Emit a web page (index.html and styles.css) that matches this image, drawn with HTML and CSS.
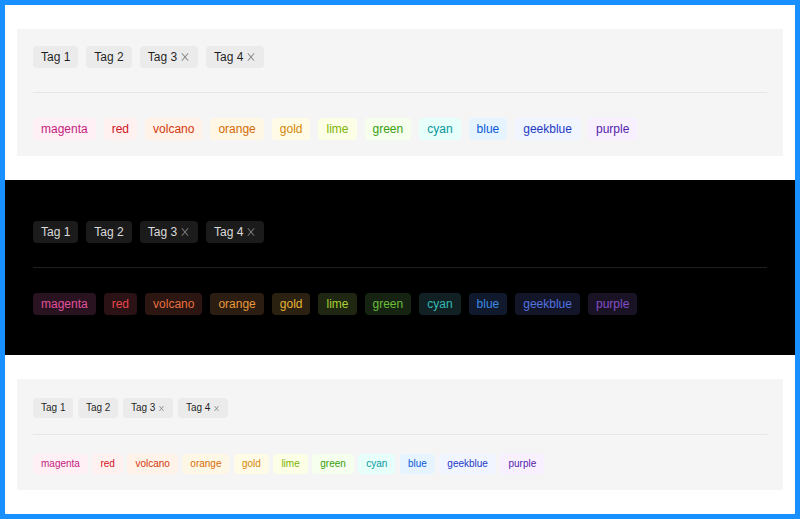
FILE: index.html
```html
<!DOCTYPE html>
<html>
<head>
<meta charset="utf-8">
<link rel="stylesheet" href="styles.css">
</head>
<body>
<svg width="0" height="0" style="position:absolute">
  <defs>
    <symbol id="x" viewBox="64 64 896 896"><path d="M563.8 512l262.5-312.9c4.4-5.2.7-13.1-6.1-13.1h-79.8c-4.7 0-9.2 2.1-12.3 5.7L511.6 449.8 295.1 191.7c-3-3.6-7.5-5.7-12.3-5.7H203c-6.8 0-10.5 7.9-6.1 13.1L459.4 512 196.9 824.9A7.950 7.950 0 00203 838h79.8c4.7 0 9.2-2.1 12.3-5.7l216.5-258.1 216.5 258.1c3 3.6 7.5 5.7 12.3 5.7h79.8c6.8 0 10.5-7.9 6.1-13.1L563.8 512z" fill="currentColor"/></symbol>
  </defs>
</svg>

<section class="wrap light">
  <div class="panel">
    <div class="row">
      <span class="tag">Tag 1</span>
      <span class="tag">Tag 2</span>
      <span class="tag">Tag 3<svg class="close"><use href="#x"/></svg></span>
      <span class="tag">Tag 4<svg class="close"><use href="#x"/></svg></span>
    </div>
    <div class="divider"></div>
    <div class="row">
      <span class="tag magenta">magenta</span>
      <span class="tag red">red</span>
      <span class="tag volcano">volcano</span>
      <span class="tag orange">orange</span>
      <span class="tag gold">gold</span>
      <span class="tag lime">lime</span>
      <span class="tag green">green</span>
      <span class="tag cyan">cyan</span>
      <span class="tag blue">blue</span>
      <span class="tag geekblue">geekblue</span>
      <span class="tag purple">purple</span>
    </div>
  </div>
</section>

<section class="wrap dark">
  <div class="panel">
    <div class="row">
      <span class="tag">Tag 1</span>
      <span class="tag">Tag 2</span>
      <span class="tag">Tag 3<svg class="close"><use href="#x"/></svg></span>
      <span class="tag">Tag 4<svg class="close"><use href="#x"/></svg></span>
    </div>
    <div class="divider"></div>
    <div class="row">
      <span class="tag magenta">magenta</span>
      <span class="tag red">red</span>
      <span class="tag volcano">volcano</span>
      <span class="tag orange">orange</span>
      <span class="tag gold">gold</span>
      <span class="tag lime">lime</span>
      <span class="tag green">green</span>
      <span class="tag cyan">cyan</span>
      <span class="tag blue">blue</span>
      <span class="tag geekblue">geekblue</span>
      <span class="tag purple">purple</span>
    </div>
  </div>
</section>

<section class="wrap light small">
  <div class="panel">
    <div class="row">
      <span class="tag">Tag 1</span>
      <span class="tag">Tag 2</span>
      <span class="tag">Tag 3<svg class="close"><use href="#x"/></svg></span>
      <span class="tag">Tag 4<svg class="close"><use href="#x"/></svg></span>
    </div>
    <div class="divider"></div>
    <div class="row">
      <span class="tag magenta">magenta</span>
      <span class="tag red">red</span>
      <span class="tag volcano">volcano</span>
      <span class="tag orange">orange</span>
      <span class="tag gold">gold</span>
      <span class="tag lime">lime</span>
      <span class="tag green">green</span>
      <span class="tag cyan">cyan</span>
      <span class="tag blue">blue</span>
      <span class="tag geekblue">geekblue</span>
      <span class="tag purple">purple</span>
    </div>
  </div>
</section>
</body>
</html>
```
FILE: styles.css
```css
* { box-sizing: border-box; }
html, body { margin: 0; padding: 0; }
body {
  width: 800px;
  height: 519px;
  border: 5px solid #1890ff;
  background: #fff;
  font-family: "Liberation Sans", Arial, sans-serif;
  font-size: 12px;
  overflow: hidden;
}
.wrap {
  padding: 24px 12px;
}
.panel {
  background: #f5f5f5;
  padding: 17px 16px 16px;
}
.row {
  display: flex;
  gap: 8px;
}
.divider {
  height: 1px;
  background: #e7e7e7;
  margin: 24px 0 25px;
}
.tag {
  display: inline-flex;
  align-items: center;
  height: 22px;
  line-height: 20px;
  padding: 0 8px;
  border-radius: 4px;
  background: #ebebeb;
  color: rgba(0,0,0,0.88);
  font-size: 12px;
  white-space: nowrap;
}
.close {
  width: 10px;
  height: 10px;
  margin-left: 3px;
  color: rgba(0,0,0,0.45);
}

.magenta { background: #fff0f6; color: #c41d7f; }
.red { background: #fff1f0; color: #cf1322; }
.volcano { background: #fff2e8; color: #d4380d; }
.orange { background: #fff7e6; color: #d46b08; }
.gold { background: #fffbe6; color: #d48806; }
.lime { background: #fcffe6; color: #7cb305; }
.green { background: #f6ffed; color: #389e0d; }
.cyan { background: #e6fffb; color: #08979c; }
.blue { background: #e6f4ff; color: #0958d9; }
.geekblue { background: #f0f5ff; color: #1d39c4; }
.purple { background: #f9f0ff; color: #531dab; }

/* dark */
.dark { background: #000; }
.dark .panel { background: #000; }
.dark .divider { background: #1f1f1f; }
.dark .tag { background: #1b1b1b; color: rgba(255,255,255,0.85); }
.dark .close { color: rgba(255,255,255,0.45); }
.dark .magenta { background: #291321; color: #e0529c; }
.dark .red { background: #2a1215; color: #e84749; }
.dark .volcano { background: #2b1611; color: #e87040; }
.dark .orange { background: #2b1d11; color: #e89a3c; }
.dark .gold { background: #2b2111; color: #e8b339; }
.dark .lime { background: #1f2611; color: #a9d134; }
.dark .green { background: #162312; color: #6abe39; }
.dark .cyan { background: #112123; color: #33bcb7; }
.dark .blue { background: #111a2c; color: #3c89e8; }
.dark .geekblue { background: #131629; color: #5273e0; }
.dark .purple { background: #1a1325; color: #854eca; }

/* small */
.small .panel { padding: 19px 16px 16px; }
.small .row { gap: 4.5px; }
.small .divider { margin: 16px 0 19px; }
.small .tag {
  height: 20px;
  line-height: 18px;
  font-size: 10px;
  padding: 0 8px;
}
.small .close {
  width: 7px;
  height: 7px;
  margin-left: 3px;
}
```
